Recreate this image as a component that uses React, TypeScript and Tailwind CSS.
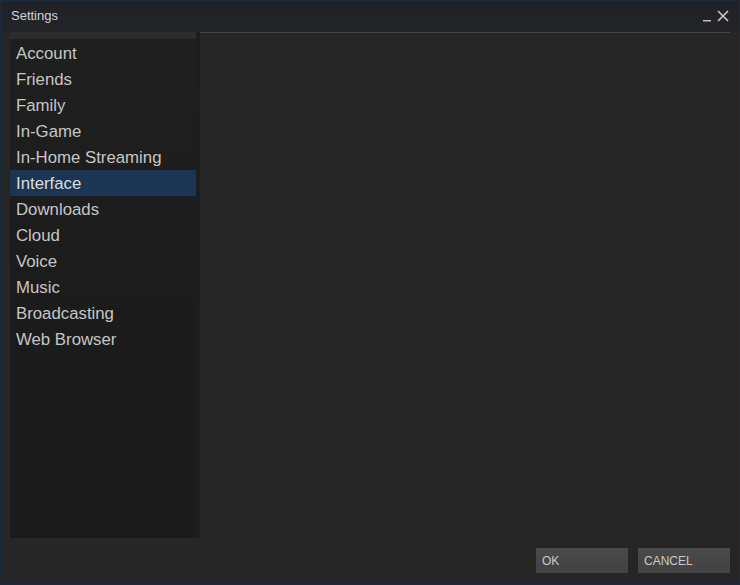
const sections = [
  "Account",
  "Friends",
  "Family",
  "In-Game",
  "In-Home Streaming",
  "Interface",
  "Downloads",
  "Cloud",
  "Voice",
  "Music",
  "Broadcasting",
  "Web Browser",
];

const active = "Interface";

export default function App() {
  return (
    <div
      className="w-[740px] h-[585px] flex flex-col bg-[#262626] border border-[#1b2b3b] text-[#c6c6c6]"
      style={{ fontFamily: '"Liberation Sans", Arial, sans-serif' }}
    >
      {/* title bar */}
      <div className="h-[31px] flex items-center justify-between bg-gradient-to-b from-[#202227] to-[#232428] pl-[10px] pr-[10px]">
        <span className="text-[13px] text-[#d2d2d2] -mt-[2px]">Settings</span>
        <div className="flex items-center gap-[6px] -mt-[1px]">
          <svg width="8" height="12" viewBox="0 0 8 12">
            <rect x="0" y="10" width="8" height="1.5" fill="#bdbdbd" />
          </svg>
          <svg width="12" height="12" viewBox="0 0 12 12">
            <path d="M1 1 L11 11 M11 1 L1 11" stroke="#c8c8c8" strokeWidth="1.6" />
          </svg>
        </div>
      </div>

      {/* body */}
      <div className="flex pl-[9px] pr-[9px]">
        <div className="w-[190px] h-[506px] flex bg-[#1b1b1b]">
          <div className="w-[186px] flex flex-col">
            <div className="h-[7px] bg-[#2c2c2c]" />
            <div className="flex flex-col pt-[1px] bg-gradient-to-b from-[#1f1f1f] to-[#1b1b1b]">
              {sections.map((s) => (
                <div
                  key={s}
                  className={`h-[26px] flex items-center pl-[6px] pt-[2px] text-[16.8px] ${
                    s === active ? "bg-[#1b3655] text-[#dcdcdc]" : ""
                  }`}
                >
                  {s}
                </div>
              ))}
            </div>
          </div>
          <div className="flex-1 bg-[#1d1d1d]" />
        </div>
        <div className="flex-1 border-t border-[#464646]" />
      </div>

      {/* footer buttons */}
      <div className="flex justify-end gap-[10px] pt-[10px] pr-[9px]">
        <button className="w-[92px] h-[25px] text-left pl-[6px] text-[12px] text-[#cacaca] bg-gradient-to-b from-[#4a4a4a] to-[#424242]">
          OK
        </button>
        <button className="w-[92px] h-[25px] text-left pl-[6px] text-[12px] text-[#cacaca] bg-gradient-to-b from-[#4a4a4a] to-[#424242]">
          CANCEL
        </button>
      </div>
    </div>
  );
}
